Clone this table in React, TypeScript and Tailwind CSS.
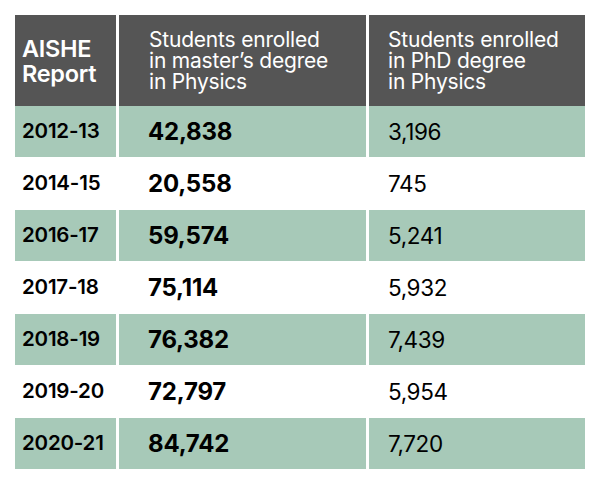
const filas = [
  { anio: '2012-13', master: '42,838', phd: '3,196' },
  { anio: '2014-15', master: '20,558', phd: '745' },
  { anio: '2016-17', master: '59,574', phd: '5,241' },
  { anio: '2017-18', master: '75,114', phd: '5,932' },
  { anio: '2018-19', master: '76,382', phd: '7,439' },
  { anio: '2019-20', master: '72,797', phd: '5,954' },
  { anio: '2020-21', master: '84,742', phd: '7,720' },
]

export default function App() {
  return (
    <div className="w-[600px] h-[488px] bg-white pt-[15px] pl-[15px] font-['Inter','Noto_Sans',sans-serif]">
      <div className="grid grid-cols-[101px_247px_216px] gap-x-[3px]">
        {/* Cabecera */}
        <div className="h-[91px] bg-[#555555] flex items-center pl-[7px]">
          <span className="text-white text-[23.5px] font-semibold leading-[25px] tracking-[-0.3px]">
            AISHE
            <br />
            Report
          </span>
        </div>
        <div className="h-[91px] bg-[#555555] flex items-center pl-[30px]">
          <span className="text-white text-[21px] leading-[21px] tracking-[-0.2px]">
            Students enrolled
            <br />
            in master’s degree
            <br />
            in Physics
          </span>
        </div>
        <div className="h-[91px] bg-[#555555] flex items-center pl-[19px]">
          <span className="text-white text-[21px] leading-[21px] tracking-[-0.2px]">
            Students enrolled
            <br />
            in PhD degree
            <br />
            in Physics
          </span>
        </div>

        {/* Filas */}
        {filas.map((f, i) => {
          const fondo = i % 2 === 0 ? 'bg-[#a7c9b8]' : 'bg-white'
          return (
            <div key={f.anio} className="contents">
              <div className={`h-[52px] ${fondo} flex items-center pl-[7px] border-b border-white`}>
                <span className="text-[20.5px] font-semibold text-black tracking-[-0.2px]">{f.anio}</span>
              </div>
              <div className={`h-[52px] ${fondo} flex items-center pl-[29px] border-b border-white`}>
                <span className="text-[24px] font-bold text-black tracking-[-0.2px]">{f.master}</span>
              </div>
              <div className={`h-[52px] ${fondo} flex items-center pl-[19px] border-b border-white`}>
                <span className="text-[22.5px] text-black tracking-[-0.4px]">{f.phd}</span>
              </div>
            </div>
          )
        })}
      </div>
    </div>
  )
}
